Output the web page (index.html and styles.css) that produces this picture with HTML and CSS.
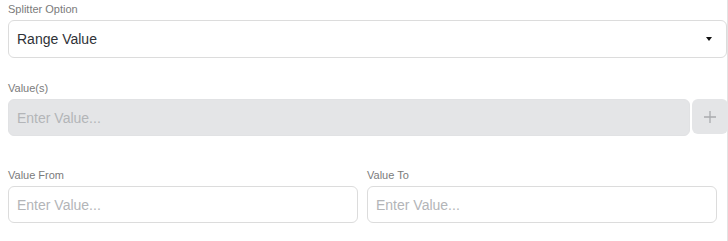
FILE: index.html
```html
<!DOCTYPE html>
<html lang="en">
<head>
  <meta charset="UTF-8" />
  <meta name="viewport" content="width=device-width, initial-scale=1.0" />
  <title>Splitter Options</title>
  <link rel="stylesheet" href="styles.css">
</head>
<body>

  <div class="panel">
    <!-- Splitter option -->
    <div class="field">
      <label class="field-label">Splitter Option</label>
      <div class="select">
        <span class="select-value">Range Value</span>
        <span class="caret"></span>
      </div>
    </div>

    <!-- Values -->
    <div class="field field-values">
      <label class="field-label">Value(s)</label>
      <div class="values-row">
        <input type="text" class="text-input" placeholder="Enter Value..." disabled />
        <button class="add-btn" disabled>
          <svg width="14" height="14" viewBox="0 0 14 14">
            <path d="M7 1v12M1 7h12" stroke="#a9abae" stroke-width="1.3" fill="none" />
          </svg>
        </button>
      </div>
    </div>

    <!-- Range -->
    <div class="range-row">
      <div class="field">
        <label class="field-label">Value From</label>
        <input type="text" class="text-input" placeholder="Enter Value..." />
      </div>
      <div class="field">
        <label class="field-label">Value To</label>
        <input type="text" class="text-input" placeholder="Enter Value..." />
      </div>
    </div>
  </div>

</body>
</html>
```

FILE: styles.css
```css
body {
  margin: 0;
  background-color: #fff;
  font-family: "Liberation Sans", Arial, sans-serif;
}

.panel {
  width: 719px;
  height: 241px;
  padding-left: 8px;
  border-right: 1px solid #e3e3e3;
}

.field {
  display: flex;
  flex-direction: column;
}

.field-label {
  display: block;
  padding-top: 2px;
  margin-bottom: 4px;
  font-size: 11px;
  line-height: 14px;
  color: #7b7b7b;
}

.select {
  height: 38px;
  box-sizing: border-box;
  border: 1px solid #dcdcdc;
  border-radius: 6px;
  display: flex;
  align-items: center;
  justify-content: space-between;
  padding: 0 14px 0 8px;
  font-size: 14px;
  color: #2f3237;
}

.caret {
  width: 0;
  height: 0;
  border-left: 3.5px solid transparent;
  border-right: 3.5px solid transparent;
  border-top: 4px solid #111;
}

.field-values {
  margin-top: 21px;
}

.values-row {
  display: flex;
  gap: 2px;
}

.text-input {
  height: 37px;
  box-sizing: border-box;
  width: 100%;
  border: 1px solid #dcdcdc;
  border-radius: 6px;
  padding: 0 8px;
  font-family: "Liberation Sans", Arial, sans-serif;
  font-size: 14px;
  color: #2f3237;
  background: #fff;
  outline: none;
}

.text-input::placeholder {
  color: #b3b5b8;
}

.values-row .text-input {
  background: #e4e5e7;
  border-color: #e1e2e4;
}

.add-btn {
  flex: 0 0 36px;
  height: 35px;
  margin-right: -1px;
  border: none;
  border-radius: 6px;
  background: #e4e5e7;
  display: flex;
  align-items: center;
  justify-content: center;
  padding: 0;
}

.range-row {
  display: grid;
  grid-template-columns: 350px 350px;
  gap: 9px;
  margin-top: 30px;
}
```
